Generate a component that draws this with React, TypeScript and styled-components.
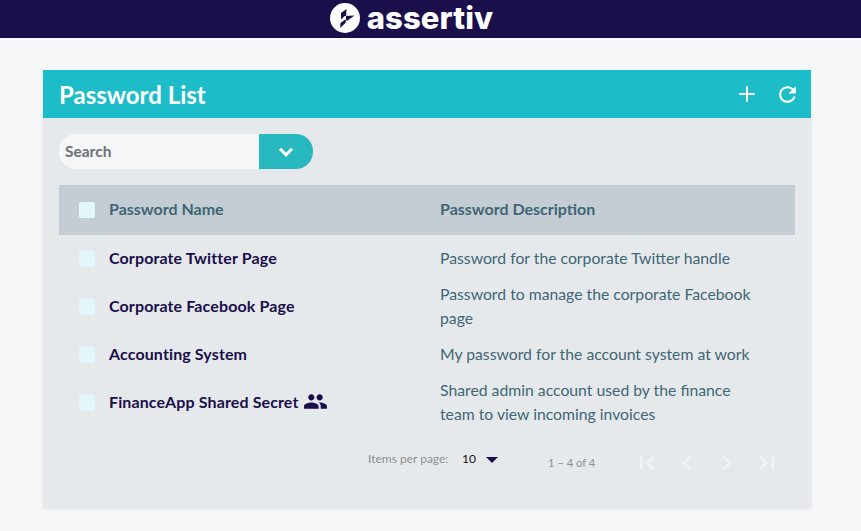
import { createGlobalStyle } from "styled-components"
import styled from "styled-components"
import { Plus } from "lucide-react"

const rows = [
  { name: "Corporate Twitter Page", description: "Password for the corporate Twitter handle" },
  { name: "Corporate Facebook Page", description: "Password to manage the corporate Facebook page" },
  { name: "Accounting System", description: "My password for the account system at work" },
  {
    name: "FinanceApp Shared Secret",
    description: "Shared admin account used by the finance team to view incoming invoices",
    shared: true,
  },
]

const pageIcons = [
  "M18.41 16.59L13.82 12l4.59-4.59L17 6l-6 6 6 6zM6 6h2v12H6z",
  "M15.41 7.41L14 6l-6 6 6 6 1.41-1.41L10.83 12z",
  "M10 6L8.59 7.41 13.17 12l-4.58 4.59L10 18l6-6z",
  "M5.59 7.41L10.18 12l-4.59 4.59L7 18l6-6-6-6zM16 6h2v12h-2z",
]

const App = () => {
  return (
    <>
      <GlobalStyle />
      <TopBar>
        <Logo>
          <svg width="30" height="30" viewBox="0 0 30 30">
            <circle cx="15" cy="15" r="15" fill="#fff" />
            <path d="M16.5 6L11 10v6.5l3.6-3.4 9.9-.6-7.4 5.3-2.2-1-4.4 3.1-.3 5.1 5.4-5.2.1-.1z" fill="#1a0f4b" />
          </svg>
          <LogoText>assertiv</LogoText>
        </Logo>
      </TopBar>
      <Page>
        <Card>
          <CardHeader>
            <Title>Password List</Title>
            <HeaderActions>
              <Plus size={24} strokeWidth={2} />
              <svg width="25" height="25" viewBox="0 0 24 24" fill="#fff">
                <path d="M17.65 6.35C16.2 4.9 14.21 4 12 4c-4.42 0-7.99 3.58-7.99 8s3.57 8 7.99 8c3.73 0 6.84-2.55 7.73-6h-2.08c-.82 2.33-3.04 4-5.65 4-3.31 0-6-2.69-6-6s2.69-6 6-6c1.66 0 3.14.69 4.22 1.78L13 11h7V4l-2.35 2.35z" />
              </svg>
            </HeaderActions>
          </CardHeader>
          <CardBody>
            <SearchBox>
              <SearchInput>Search</SearchInput>
              <SearchButton>
                <svg width="16" height="10" viewBox="0 0 16 10">
                  <path d="M2 1.8l6 6 6-6" fill="none" stroke="#fff" strokeWidth="3" />
                </svg>
              </SearchButton>
            </SearchBox>
            <TableHead>
              <Check />
              <HeadCell>Password Name</HeadCell>
              <HeadCell>Password Description</HeadCell>
            </TableHead>
            {rows.map((row) => (
              <Row key={row.name}>
                <Check />
                <Name>
                  {row.name}
                  {row.shared && (
                    <svg width="25" height="25" viewBox="0 0 24 24" fill="#1a0f4b">
                      <path d="M16 11c1.66 0 2.99-1.34 2.99-3S17.66 5 16 5s-3 1.34-3 3 1.34 3 3 3zm-8 0c1.66 0 2.99-1.34 2.99-3S9.66 5 8 5 5 6.34 5 8s1.34 3 3 3zm0 2c-2.33 0-7 1.17-7 3.5V19h14v-2.5C15 14.17 10.33 13 8 13zm8 0c-.29 0-.62.02-.97.05 1.16.84 1.97 1.97 1.97 3.45V19h6v-2.5c0-2.33-4.67-3.5-7-3.5z" />
                    </svg>
                  )}
                </Name>
                <Description>{row.description}</Description>
              </Row>
            ))}
            <Paginator>
              <PageLabel>Items per page:</PageLabel>
              <PageSize>10</PageSize>
              <Caret />
              <RangeLabel>1 – 4 of 4</RangeLabel>
              <PageButtons>
                {pageIcons.map((d) => (
                  <PageButton key={d}>
                    <svg width="28" height="28" viewBox="0 0 24 24" fill="#f1f3f5">
                      <path d={d} />
                    </svg>
                  </PageButton>
                ))}
              </PageButtons>
            </Paginator>
          </CardBody>
        </Card>
      </Page>
    </>
  )
}

const GlobalStyle = createGlobalStyle`
  html, body {
    margin: 0;
    height: 531px;
    overflow: hidden;
    background: #f5f7f9;
    font-family: "Lato", "Liberation Sans", sans-serif;
  }
`

const TopBar = styled.header`
  height: 38px;
  padding-right: 38px;
  background: #1a0f4b;
  display: flex;
  justify-content: center;
  overflow: hidden;
`

const Logo = styled.div`
  display: flex;
  align-items: center;
  gap: 7px;
  height: 36px;
`

const LogoText = styled.span`
  font-family: "Inter", sans-serif;
  font-size: 31px;
  font-weight: 800;
  line-height: 32px;
  letter-spacing: 0.1px;
  color: #fff;
`

const Page = styled.main`
  padding: 32px 50px 23px 43px;
`

const Card = styled.section`
  width: 768px;
  height: 438px;
  background: #e6e9ec;
  box-shadow: 0 1px 4px rgba(0, 0, 0, 0.08);
`

const CardHeader = styled.div`
  height: 48px;
  padding: 0 11px 0 16px;
  background: #1cbdc9;
  color: #fff;
  display: flex;
  align-items: center;
  justify-content: space-between;
`

const Title = styled.h1`
  margin: 0;
  font-size: 24px;
  font-weight: 700;
  color: #fff;
`

const HeaderActions = styled.div`
  display: flex;
  align-items: center;
  gap: 16px;
`

const CardBody = styled.div`
  padding: 16px;
`

const SearchBox = styled.div`
  width: 254px;
  height: 35px;
  display: flex;
  margin-bottom: 16px;
`

const SearchInput = styled.div`
  width: 194px;
  padding-left: 6px;
  background: #f5f6f8;
  border-radius: 17px 0 0 17px;
  font-size: 15.5px;
  font-weight: 700;
  line-height: 35px;
  color: #6f7175;
`

const SearchButton = styled.div`
  width: 54px;
  background: #27b8c0;
  border-radius: 0 17px 17px 0;
  display: flex;
  align-items: center;
  justify-content: center;
`

const TableHead = styled.div`
  height: 50px;
  padding-left: 20px;
  background: #c5cdd4;
  display: grid;
  grid-template-columns: 16px 317px 1fr;
  column-gap: 14px;
  align-items: center;
`

const Check = styled.span`
  width: 16px;
  height: 16px;
  background: #e2f7fa;
  border-radius: 2px;
`

const HeadCell = styled.div`
  font-size: 16px;
  font-weight: 700;
  line-height: 24px;
  color: #3e6675;
  margin-top: -2px;
`

const Row = styled.div`
  height: 48px;
  padding-left: 20px;
  display: grid;
  grid-template-columns: 16px 317px 320px;
  column-gap: 14px;
  align-items: center;
`

const Name = styled.div`
  display: flex;
  align-items: center;
  gap: 4px;
  height: 24px;
  margin-top: -3px;
  font-size: 16px;
  font-weight: 700;
  letter-spacing: 0.12px;
  color: #1a0f4b;
`

const Description = styled.div`
  font-size: 15.75px;
  line-height: 24px;
  margin-top: -2px;
  color: #3e6675;
`

const Paginator = styled.div`
  height: 56px;
  display: flex;
  align-items: center;
  padding-top: 16px;
  padding-left: 309px;
  box-sizing: border-box;
`

const PageLabel = styled.span`
  width: 94px;
  margin-top: -9px;
  font-size: 12px;
  color: #8c8f93;
`

const PageSize = styled.span`
  width: 24px;
  margin-top: -9px;
  font-size: 12px;
  color: #111;
`

const Caret = styled.span`
  width: 0;
  height: 0;
  margin-top: -7px;
  border-left: 6px solid transparent;
  border-right: 6px solid transparent;
  border-top: 6px solid #1a0f4b;
`

const RangeLabel = styled.span`
  width: 79px;
  margin-top: -2px;
  margin-left: 50px;
  font-size: 11.2px;
  color: #8c8f93;
`

const PageButtons = styled.div`
  display: flex;
`

const PageButton = styled.div`
  width: 40px;
  height: 40px;
  display: flex;
  align-items: center;
  justify-content: center;
`

export default App
